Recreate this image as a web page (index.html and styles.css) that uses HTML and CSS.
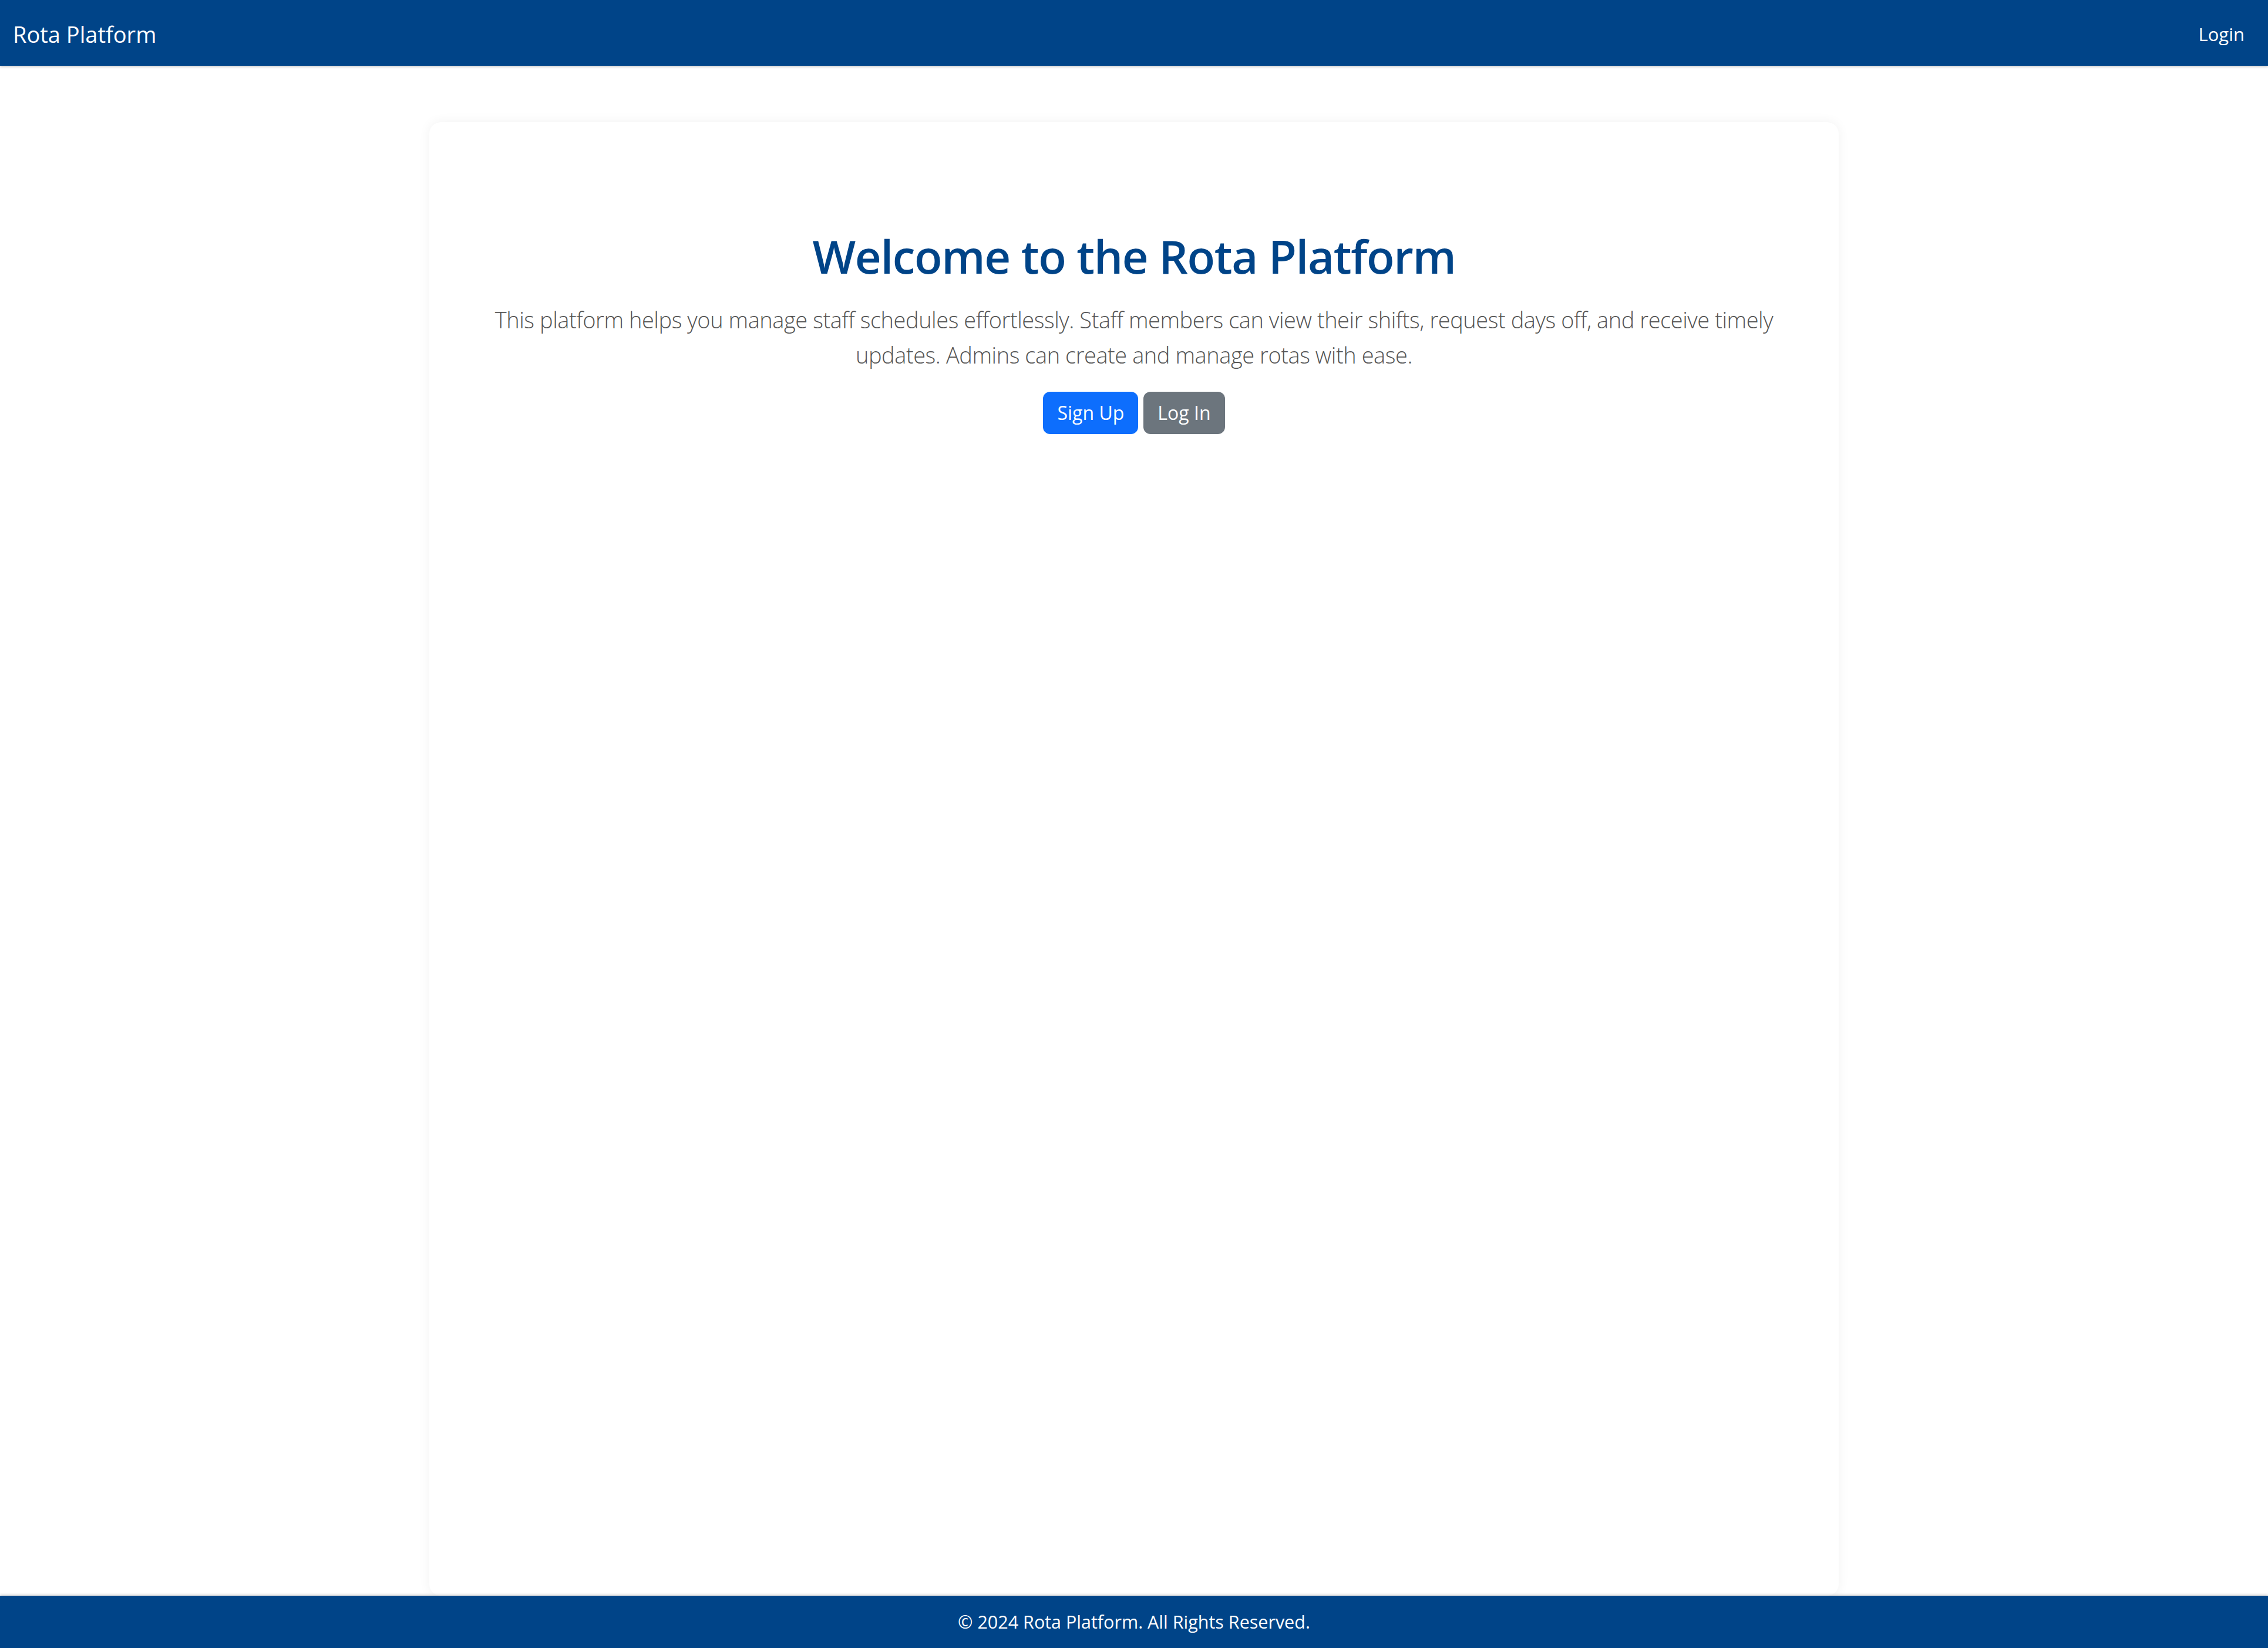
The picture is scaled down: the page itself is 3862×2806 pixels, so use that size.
FILE: index.html
```html
<!DOCTYPE html>
<html lang="en">
<head>
<meta charset="utf-8">
<title>Rota Platform</title>
<link rel="stylesheet" href="styles.css">
</head>
<body>
<nav class="navbar">
  <a class="brand" href="#">Rota Platform</a>
  <a class="nav-link" href="#">Login</a>
</nav>
<main class="main">
  <section class="card">
    <div class="hero">
      <h1 class="title">Welcome to the Rota Platform</h1>
      <p class="lead">This platform helps you manage staff schedules effortlessly. Staff members can view their shifts, request days off, and receive timely updates. Admins can create and manage rotas with ease.</p>
      <div class="actions">
        <a class="btn btn-primary" href="#">Sign Up</a>
        <a class="btn btn-secondary" href="#">Log In</a>
      </div>
    </div>
  </section>
</main>
<footer class="footer">© 2024 Rota Platform. All Rights Reserved.</footer>
</body>
</html>
```
FILE: styles.css
```css
* { box-sizing: border-box; }
html, body { height: 100%; }
body {
  margin: 0;
  font-family: "Open Sans", "Noto Sans", sans-serif;
  background: #ffffff;
  color: #212529;
  display: flex;
  flex-direction: column;
  min-height: 100vh;
}
a { text-decoration: none; }

.navbar {
  height: 112px;
  background: #004488;
  display: flex;
  align-items: center;
  justify-content: space-between;
  padding: 4px 40px 0 22px;
  box-shadow: 0 2px 4px rgba(0, 0, 0, 0.2);
  position: relative;
  z-index: 1;
}
.brand {
  color: #ffffff;
  font-size: 38px;
  line-height: 60px;
}
.nav-link {
  color: #ffffff;
  font-size: 31px;
  line-height: 48px;
}

.main {
  flex: 1;
  display: flex;
  flex-direction: column;
  align-items: center;
  padding-top: 96px;
}
.card {
  flex: 1;
  width: 2400px;
  background: #ffffff;
  border-radius: 20px;
  box-shadow: 0 0 20px rgba(0, 0, 0, 0.06);
  padding: 180px 96px 96px;
}
.hero { text-align: center; }
.title {
  margin: 0 0 30px;
  font-size: 78px;
  letter-spacing: -1.4px;
  line-height: 96px;
  font-weight: 600;
  color: #004488;
}
.lead {
  margin: 0 0 33px;
  font-size: 38px;
  letter-spacing: -0.45px;
  line-height: 60px;
  font-weight: 300;
  color: #555555;
}
.actions {
  display: flex;
  justify-content: center;
  gap: 9px;
}
.btn {
  display: inline-block;
  font-size: 32px;
  line-height: 48px;
  padding: 12px 24px;
  border-radius: 12px;
  color: #ffffff;
}
.btn-primary { background: #0d6efd; }
.btn-secondary { background: #6c757d; }

.footer {
  height: 89px;
  background: #004488;
  color: #ffffff;
  font-size: 30.5px;
  line-height: 89px;
  text-align: center;
  box-shadow: 0 -2px 4px rgba(0, 0, 0, 0.15);
  position: relative;
}
```
